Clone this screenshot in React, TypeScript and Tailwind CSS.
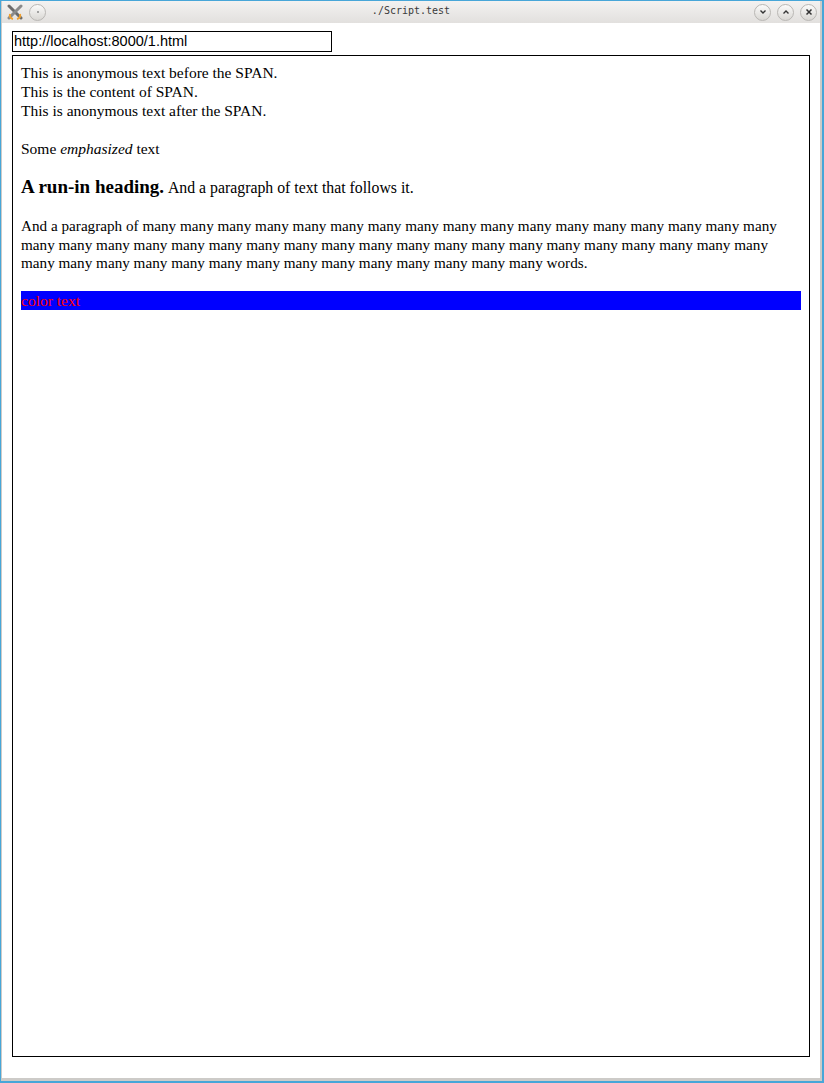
import React from "react";

const serif = { fontFamily: '"Liberation Serif", "Times New Roman", serif' };

function RoundBtn({ children }: { children?: React.ReactNode }) {
  return (
    <div className="w-[17px] h-[17px] rounded-full border border-[#b9b7b4] bg-gradient-to-b from-[#fbfbfa] to-[#d9d7d4] flex items-center justify-center">
      {children}
    </div>
  );
}

const m = (n: number) => Array(n).fill("many").join(" ");

export default function App() {
  return (
    <div className="w-[824px] h-[1083px] bg-[#47a6d8] pt-[1px] pl-[1px] pr-[2px] pb-[2px] flex flex-col">
      <div className="flex-1 flex flex-col bg-[#cdcbc8] pl-[1px] pr-[2px] pb-[3px]">
        {/* title bar */}
        <div className="h-[22px] bg-gradient-to-b from-[#f3f2f1] to-[#e2e0de] flex items-center relative">
          <div className="ml-[4px] w-[18px] h-[18px] flex items-center justify-center">
            <svg width="16" height="16" viewBox="0 0 16 16">
              <path d="M2 2 L14 14" stroke="#6b6b6b" strokeWidth="3" strokeLinecap="round" />
              <path d="M14 2 L2 14" stroke="#8a8a8a" strokeWidth="3" strokeLinecap="round" />
              <path d="M3 10 Q2 14 6 15" stroke="#f0a030" strokeWidth="2" fill="none" />
              <path d="M13 10 Q14 14 10 15" stroke="#f0a030" strokeWidth="2" fill="none" />
            </svg>
          </div>
          <div className="ml-[5px]">
            <RoundBtn>
              <div className="w-[2px] h-[2px] rounded-full bg-[#888]" />
            </RoundBtn>
          </div>
          <div
            className="absolute left-0 right-0 top-[4px] text-center text-[10px] leading-[12px] text-[#3a3a3a]"
            style={{ fontFamily: '"DejaVu Sans Mono", monospace' }}
          >
            ./Script.test
          </div>
          <div className="ml-auto mr-[3px] flex gap-[6px] relative">
            <RoundBtn>
              <svg width="8" height="8" viewBox="0 0 8 8">
                <path d="M1.5 2.5 L4 5 L6.5 2.5" stroke="#333" strokeWidth="1.4" fill="none" />
              </svg>
            </RoundBtn>
            <RoundBtn>
              <svg width="8" height="8" viewBox="0 0 8 8">
                <path d="M1.5 5.5 L4 3 L6.5 5.5" stroke="#333" strokeWidth="1.4" fill="none" />
              </svg>
            </RoundBtn>
            <RoundBtn>
              <svg width="8" height="8" viewBox="0 0 8 8">
                <path d="M1.5 1.5 L6.5 6.5 M6.5 1.5 L1.5 6.5" stroke="#333" strokeWidth="1.5" fill="none" />
              </svg>
            </RoundBtn>
          </div>
        </div>
        {/* content */}
        <div className="flex-1 bg-white pl-[10px] pt-[8px]">
          <div
            className="w-[320px] h-[21px] border border-black pl-[1px] text-[14.5px] leading-[19px] text-black"
            style={{ fontFamily: '"Liberation Sans", Arial, sans-serif' }}
          >
            http://localhost:8000/1.html
          </div>
          <div
            className="mt-[3px] w-[798px] h-[1002px] border border-black pt-[7px] px-[8px] text-[15.5px] leading-[19px] text-black"
            style={serif}
          >
            <div>This is anonymous text before the SPAN.</div>
            <div>This is the content of SPAN.</div>
            <div>This is anonymous text after the SPAN.</div>
            <p className="mt-[19px]">
              Some <em>emphasized</em> text
            </p>
            <p className="mt-[19px] leading-[20px]">
              <span className="font-bold text-[19px]">A run-in heading.</span>{" "}
              <span className="text-[15.8px]">And a paragraph of text that follows it.</span>
            </p>
            <p className="mt-[19px] leading-[18.5px] text-[15.2px] whitespace-nowrap">
              <span className="block">And a paragraph of {m(17)}</span>
              <span className="block">{m(20)}</span>
              <span className="block">{m(14)} words.</span>
            </p>
            <div className="mt-[18px] h-[19px] bg-[#0000ff] text-[#ff0000] leading-[19px]">color text</div>
          </div>
        </div>
      </div>
    </div>
  );
}
